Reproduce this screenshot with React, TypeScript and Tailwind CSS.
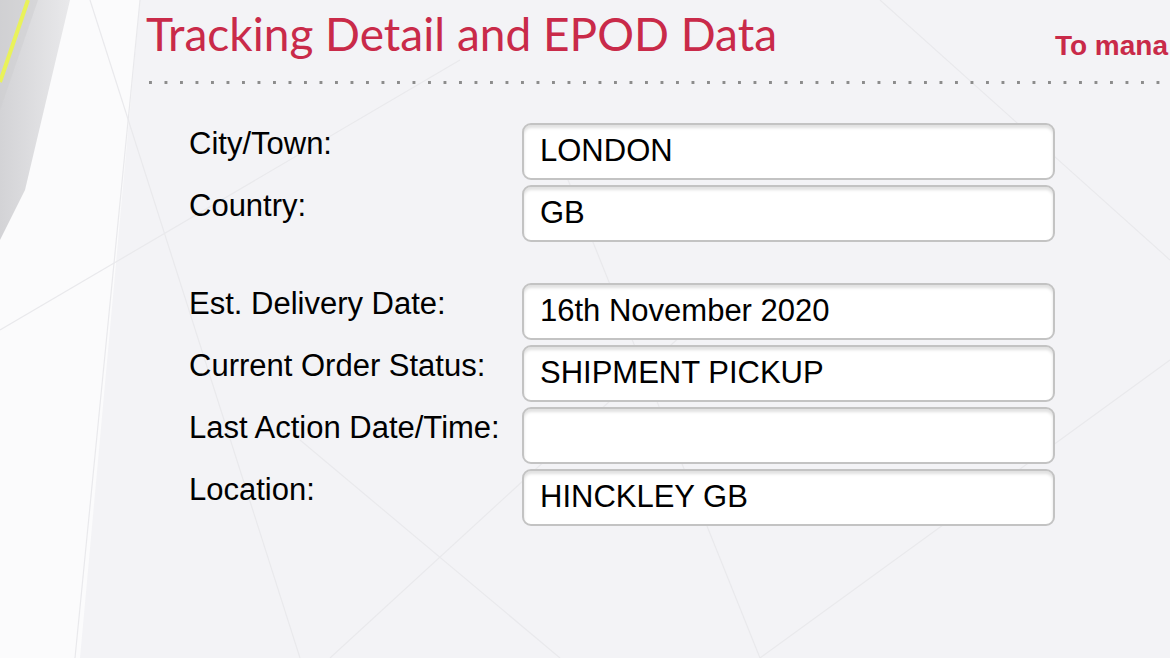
import React from 'react';

interface Field {
  label: string;
  value: string;
  gapBefore?: boolean;
}

const fields: Field[] = [
  { label: 'City/Town:', value: 'LONDON' },
  { label: 'Country:', value: 'GB' },
  { label: 'Est. Delivery Date:', value: '16th November 2020', gapBefore: true },
  { label: 'Current Order Status:', value: 'SHIPMENT PICKUP' },
  { label: 'Last Action Date/Time:', value: '' },
  { label: 'Location:', value: 'HINCKLEY GB' },
];

function Backdrop() {
  return (
    <svg
      className="absolute inset-0 h-full w-full"
      viewBox="0 0 1170 658"
      preserveAspectRatio="none"
    >
      <defs>
        <linearGradient id="band" x1="0" y1="0" x2="1" y2="0">
          <stop offset="0" stopColor="#d3d3d6" />
          <stop offset="1" stopColor="#e9e9eb" />
        </linearGradient>
      </defs>
      <rect width="1170" height="658" fill="#f3f3f6" />
      <polygon points="0,0 140,0 80,658 0,658" fill="#fbfbfc" />
      <polygon points="0,0 70,0 25,190 0,240" fill="url(#band)" />
      <polygon points="0,0 38,0 0,110" fill="#cdcdd0" opacity="0.5" />
      <line x1="28" y1="0" x2="0" y2="82" stroke="#e9f25a" strokeWidth="4" />
      <g stroke="#e9e9ec" strokeWidth="1.2" fill="none">
        <line x1="90" y1="0" x2="300" y2="658" />
        <line x1="0" y1="330" x2="460" y2="60" />
        <line x1="140" y1="0" x2="75" y2="658" />
        <line x1="330" y1="658" x2="720" y2="300" />
        <line x1="560" y1="160" x2="760" y2="658" />
        <line x1="880" y1="0" x2="1170" y2="260" />
        <line x1="760" y1="658" x2="1170" y2="360" />
        <line x1="300" y1="440" x2="560" y2="658" />
      </g>
    </svg>
  );
}

export default function App() {
  return (
    <div className="relative h-[658px] w-[1170px] overflow-hidden font-['Liberation_Sans',Arial,sans-serif]">
      <Backdrop />

      <div className="relative">
        <div className="flex h-[74px] items-start">
          <h1 className="ml-[146px] mt-[4px] whitespace-nowrap font-['Lato',sans-serif] text-[46px] leading-[60px] text-[#c92a49]">
            Tracking Detail and EPOD Data
          </h1>
          <div className="ml-auto shrink-0 whitespace-nowrap pr-[2px] pt-[30px] text-[28px] font-bold leading-[32px] text-[#c92a49]">
            To mana
          </div>
        </div>

        <div className="ml-[149px] mt-[7px] h-[3px] bg-[linear-gradient(to_right,#8c8c8c_3px,transparent_3px)] bg-[length:15.5px_3px]" />

        <div className="ml-[189px] mt-[39px] flex flex-col gap-[5px]">
          {fields.map((f) => (
            <div
              key={f.label}
              className={`flex items-start ${f.gapBefore ? 'mt-[36px]' : ''}`}
            >
              <div className="w-[333px] pt-[3px] text-[31px] leading-[35px] text-black">
                {f.label}
              </div>
              <div className="flex h-[57px] w-[533px] items-center rounded-[9px] border-2 border-[#c3c3c3] bg-white pb-[3px] pl-[16px] text-[31px] leading-[35px] text-black shadow-[inset_0_3px_3px_rgba(0,0,0,0.12)]">
                {f.value}
              </div>
            </div>
          ))}
        </div>
      </div>
    </div>
  );
}
